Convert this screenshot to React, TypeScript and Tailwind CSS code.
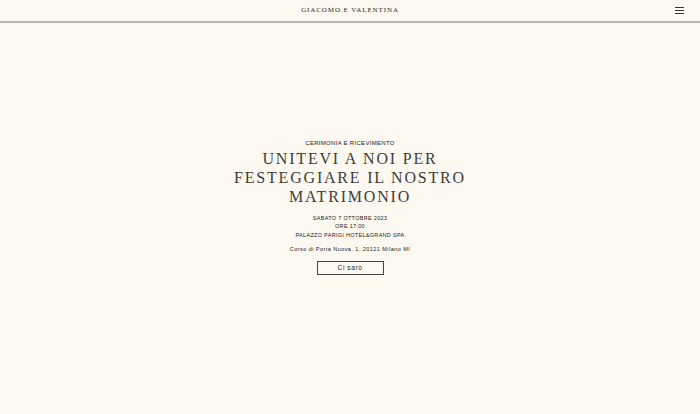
export default function App() {
  return (
    <div className="flex min-h-[414px] w-full flex-col bg-[#fdf9f1] text-[#222]">
      <header className="relative flex h-[23px] items-center justify-center border-b-2 border-[#b9b7b1]">
        <h1 className="font-['Liberation_Serif',serif] text-[7px] tracking-[0.9px] text-[#2a2a2a]">
          GIACOMO E VALENTINA
        </h1>
        <button className="absolute right-[16px] top-[7px] flex flex-col gap-[2px]">
          <span className="block h-px w-[9px] bg-[#333]" />
          <span className="block h-px w-[9px] bg-[#333]" />
          <span className="block h-px w-[9px] bg-[#333]" />
        </button>
      </header>
      <main className="flex flex-1 flex-col items-center justify-center pb-[22px] text-center font-['Liberation_Sans',sans-serif] text-[#222]">
        <p className="text-[6px] leading-[7px] tracking-[0.3px]">CERIMONIA E RICEVIMENTO</p>
        <h2 className="mt-[2px] font-['Liberation_Serif',serif] text-[16px] leading-[19px] tracking-[1.8px] text-[#3c3c3c]">
          UNITEVI A NOI PER
          <br />
          FESTEGGIARE IL NOSTRO
          <br />
          MATRIMONIO
        </h2>
        <div className="mt-[8px] flex flex-col text-[5.5px] leading-[8.5px] tracking-[0.3px]">
          <p>SABATO 7 OTTOBRE 2023</p>
          <p>ORE 17:00</p>
          <p>PALAZZO PARIGI HOTEL&amp;GRAND SPA</p>
        </div>
        <p className="mt-[7px] text-[5.5px] leading-[7px] tracking-[0.45px] text-[#222]">
          Corso di Porta Nuova, 1, 20121 Milano MI
        </p>
        <button className="mt-[8px] h-[14px] w-[67px] border border-[#444] text-[6.5px] tracking-[0.6px] text-[#222]">
          Ci sarò
        </button>
      </main>
    </div>
  );
}
